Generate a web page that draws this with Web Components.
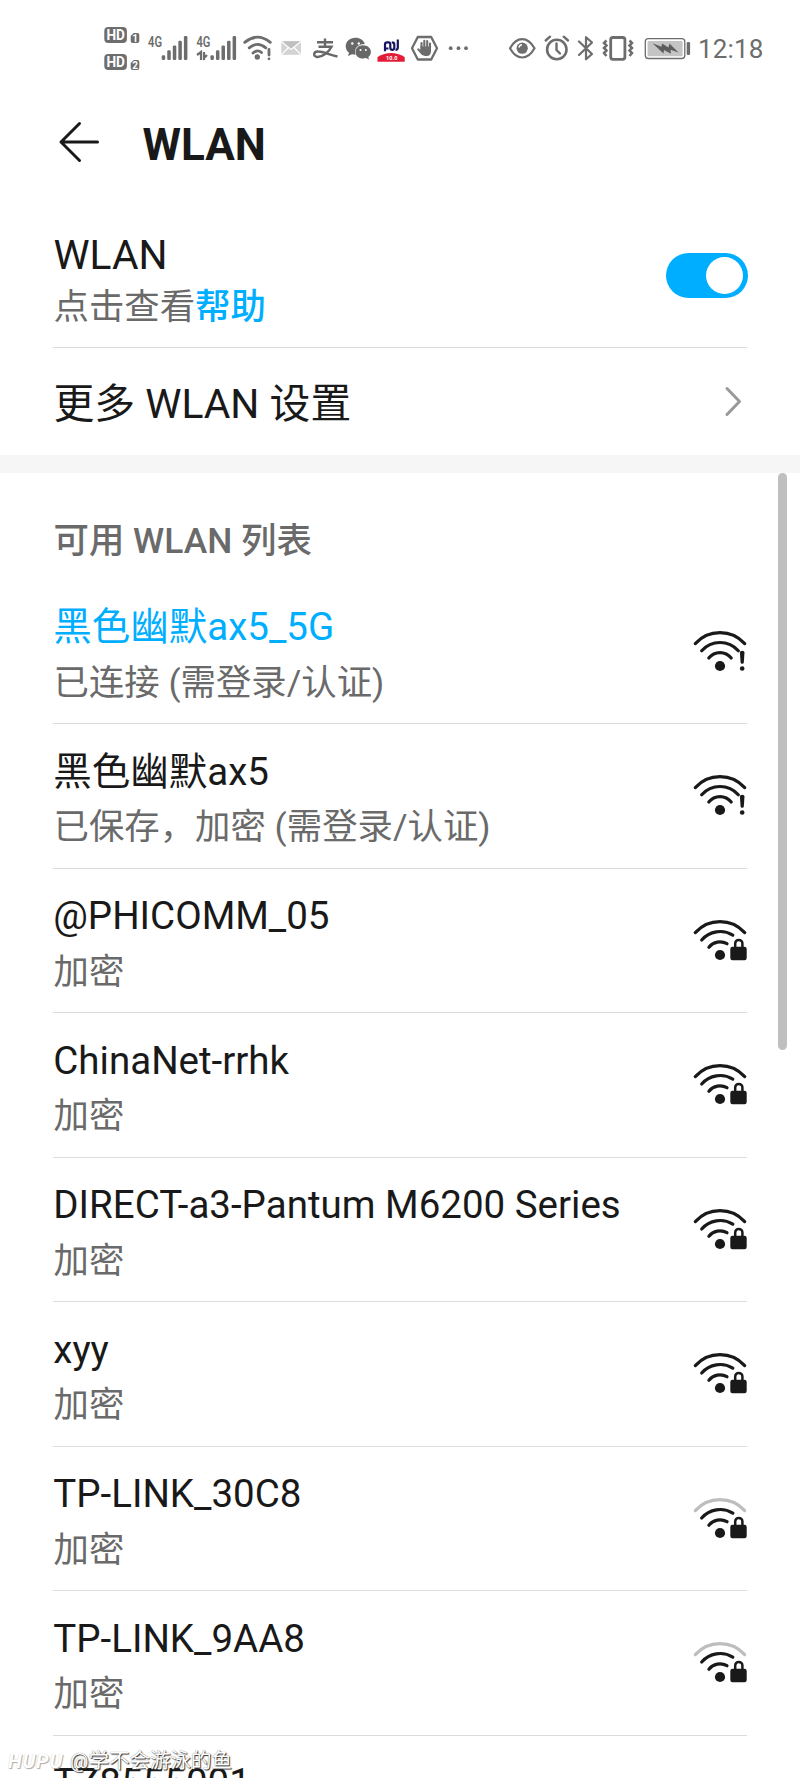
<!DOCTYPE html>
<html lang="zh-CN">
<head>
<meta charset="utf-8">
<title>WLAN</title>
<style>
html,body{margin:0;padding:0;background:#fff}
body{width:800px;height:1778px;overflow:hidden;font-family:Roboto,"Noto Sans CJK SC",sans-serif;color:#191919}
</style>
</head>
<body>
<wlan-screen>
  <status-bar slot="status"></status-bar>
  <title-bar slot="title">WLAN</title-bar>
  <wlan-switch slot="top">WLAN<span slot="hint">点击查看</span><span slot="link">帮助</span></wlan-switch>
  <nav-row slot="top">更多 WLAN 设置</nav-row>
  <section-title>可用 WLAN 列表</section-title>
  <wifi-row mark="alert" active>黑色幽默ax5_5G<span slot="sub">已连接 (需登录/认证)</span></wifi-row>
  <wifi-row mark="alert">黑色幽默ax5<span slot="sub">已保存，加密 (需登录/认证)</span></wifi-row>
  <wifi-row mark="lock">@PHICOMM_05<span slot="sub">加密</span></wifi-row>
  <wifi-row mark="lock">ChinaNet-rrhk<span slot="sub">加密</span></wifi-row>
  <wifi-row mark="lock">DIRECT-a3-Pantum M6200 Series<span slot="sub">加密</span></wifi-row>
  <wifi-row mark="lock">xyy<span slot="sub">加密</span></wifi-row>
  <wifi-row mark="lock" weak>TP-LINK_30C8<span slot="sub">加密</span></wifi-row>
  <wifi-row mark="lock" weak>TP-LINK_9AA8<span slot="sub">加密</span></wifi-row>
  <wifi-row mark="lock">TZ8555001</wifi-row>
  <photo-credit slot="credit">@学不会游泳的鱼</photo-credit>
</wlan-screen>
<script>
const define = (name, html, setup) => customElements.define(name, class extends HTMLElement {
  constructor() {
    super();
    const t = document.createElement('template');
    t.innerHTML = html;
    this.attachShadow({mode: 'open'}).append(t.content.cloneNode(true));
  }
  connectedCallback() { if (setup) setup(this, this.shadowRoot); }
});

define('wlan-screen', `<style>
:host{display:block;position:relative;width:800px;height:1778px;overflow:hidden;background:#fff}
.band{height:17.5px;background:#f6f6f6}
.list{padding:0 53px}
.thumb{position:absolute;left:778px;top:472.5px;width:9px;height:577px;border-radius:5px;background:#bfbfbf}
</style><slot name="status"></slot><slot name="title"></slot><slot name="top"></slot>
<div class="band"></div><div class="list"><slot></slot></div><div class="thumb"></div><slot name="credit"></slot>`);

/* status bar glyphs share one coordinate system: x runs along the bar, y from 20 to 76 */
const hd = (y, n) => `<rect x="104.3" y="${y}" width="22.6" height="16" rx="4" fill="#6d6d6d"/>
<text x="106.400" y="${y+13.2}" font-size="14.5" font-weight="700" textLength="18.500" lengthAdjust="spacingAndGlyphs" fill="#fff">HD</text>
<path d="M133.700 ${y+6}H137.500Q139.300 ${y+6} 139.300 ${y+8}V${y+14}Q139.300 ${y+16} 137.300 ${y+16}H132.700Q130.700 ${y+16} 130.700 ${y+14}V${y+9}Z" fill="#6d6d6d"/>
<text x="132.300" y="${y+14.8}" font-size="10" font-weight="700" fill="#fff">${n}</text>`;
const bars = x => [55.3,50.3,45.4,40.7,36].map((t,i)=>`<rect x="${x+i*5.55}" y="${t}" width="3.5" height="${60-t}" rx="1.3" fill="#6d6d6d"/>`).join('');
const g4 = x => `<text x="${x}" y="46.800" font-size="15" font-weight="600" textLength="14" lengthAdjust="spacingAndGlyphs" fill="#6d6d6d">4G</text>`;
const glyphs = [
 [100,46, hd(27,1)+hd(54,2)],
 [146,48, g4(148)+bars(161.7)],
 [194,46, g4(196.400)+bars(210.400)+`<path d="M197 55L201 52V60M207 55L204 58V52M204 60V57" fill="none" stroke="#6d6d6d" stroke-width="2.200"/>`],
 [240,36, `<g fill="none" stroke="#6d6d6d" stroke-width="2.800" stroke-linecap="round"><path d="M244.700 42.300Q257.500 32 270.300 42.300M249.200 47.800Q257.500 41 265.800 47.800M253 53Q257.500 49 261.500 52.500"/><path d="M269 49.500V55"/></g><circle cx="257.300" cy="57" r="2.700" fill="#6d6d6d"/><circle cx="269" cy="58.800" r="1.400" fill="#6d6d6d"/>`],
 [276,32, `<rect x="281.300" y="41.300" width="19.700" height="13.500" fill="#d3d3d3"/><path d="M281.300 41.500L291 49.500L301 41.500M281.500 54.600L288.500 47.500M301 54.600L294 47.500" fill="none" stroke="#fff" stroke-width="1.200"/><path d="M282.500 41.300H300L291 48.500Z" fill="#c0c0c0"/>`],
 [308,34, `<g fill="none" stroke="#686868" stroke-width="2.400"><path d="M317 42.200H333M325 38.500V46.500M318.500 46.700H331.500C329 52 322 57.300 317 57C312.500 56.500 313.500 51 318.500 51.500C325 52 331 55.500 337.500 56.500"/></g>`],
 [342,33, `<path d="M355.500 37.800C349.700 37.800 345.700 41.500 345.700 46.300C345.700 49 347 51.200 349 52.800L348 56L352 54.200L355.500 54.700C353.500 48.500 358 44 364.800 44C363.700 40.300 360 37.800 355.500 37.800Z" fill="#686868"/><path d="M363 45.300C358.600 45.300 355.500 48.200 355.500 52C355.500 55.800 358.600 58.600 363 58.600L366 58.100L369 59.500L368.300 57C370 55.700 370.900 54 370.900 52C370.900 48.200 367.500 45.300 363 45.300Z" fill="#686868"/><g fill="#fff"><circle cx="352.300" cy="43.500" r="1.200"/><circle cx="358.800" cy="43.500" r="1.200"/><circle cx="360.500" cy="50" r="1"/><circle cx="365.800" cy="50" r="1"/></g>`],
 [375,34, `<path d="M385 51.300V44.500Q385 42.300 387.200 42.300H388.500Q390.300 42.300 390.300 44.500V47.500Q390.300 49.800 392.300 49.800Q394.300 49.800 394.300 47.500V44.500Q394.300 42.300 391.800 42.300M397.800 39.500V47.500Q397.800 49.800 395.500 49.800M386 48.500H388.500" fill="none" stroke="#171461" stroke-width="2.200"/><path d="M377.500 61.700V57Q391 49 404.700 57V61.700Z" fill="#e31c36"/><text x="386" y="60.300" font-size="5.500" font-weight="700" fill="#fff" textLength="11.500">10.0</text>`],
 [409,33, `<path d="M417.800 37H431.200L437 48.200L431.200 59.500H417.800L412 48.200Z" fill="none" stroke="#6d6d6d" stroke-width="2.300" stroke-linejoin="round"/><path d="M421.500 48V43M424.300 47V40.700M427.200 47V41M430 48V43.500" stroke="#6d6d6d" stroke-width="2.100" stroke-linecap="round"/><path d="M420.400 46.500H431V51Q431 56 426.500 56H425Q422 56 420.300 53.300L417.300 49.700Q416.800 48.300 418.400 48.200L420.400 49.700Z" fill="#6d6d6d"/>`],
 [442,60, `<g fill="#6d6d6d"><circle cx="450.700" cy="48.200" r="1.900"/><circle cx="458.500" cy="48.200" r="1.900"/><circle cx="466" cy="48.200" r="1.900"/></g>`],
 [502,38, `<path d="M510 48.300Q515 39.200 522.200 39.200Q529.400 39.200 534.500 48.300Q529.400 57.500 522.200 57.500Q515 57.500 510 48.300Z" fill="none" stroke="#6d6d6d" stroke-width="2.200"/><circle cx="522.200" cy="48.200" r="5.600" fill="#6d6d6d"/><path d="M519 47.500Q519.500 45 522 44.800" fill="none" stroke="#fff" stroke-width="1.500"/>`],
 [540,34, `<circle cx="556.800" cy="49.500" r="9.700" fill="none" stroke="#6d6d6d" stroke-width="2.600"/><path d="M556.500 43.500V50L560 53.500M545.700 40.500L550 36.700M563.700 36.700L568 40.500" fill="none" stroke="#6d6d6d" stroke-width="2.400" stroke-linecap="round" stroke-linejoin="round"/>`],
 [574,24, `<path d="M579 41.500L592 54L586 59.300V37.200L592 42.500L579 55" fill="none" stroke="#6d6d6d" stroke-width="2.200" stroke-linecap="round" stroke-linejoin="round"/>`],
 [598,42, `<rect x="610.700" y="37.500" width="14.200" height="21.800" rx="2.200" fill="none" stroke="#6d6d6d" stroke-width="2.800"/><path d="M606.500 40.500L604 43L606.500 45.500L604 48L606.500 50.500L604 53L606.500 56M629.500 40.500L632 43L629.500 45.500L632 48L629.500 50.500L632 53L629.500 56" fill="none" stroke="#6d6d6d" stroke-width="2.500"/>`],
 [640,58, `<rect x="645.300" y="38.700" width="39.500" height="19.800" rx="3" fill="#fff" stroke="#6d6d6d" stroke-width="1.300"/><rect x="647.600" y="41" width="35" height="15.200" rx="1" fill="#c4c4c4"/><path d="M652.500 43.300L661.500 46.700L662 43.500L668.500 47.500L669.500 43.500L678.500 52.600L670.500 49.700L671 53.700L664 50L663.500 53.500Z" fill="#5d5d5d"/><rect x="686.700" y="42" width="3.400" height="13" rx="1.300" fill="#6d6d6d"/>`]
];
define('status-bar', `<style>
:host{display:flex;box-sizing:border-box;height:98px;padding:20px 0 0 100px;align-items:flex-start}
svg{display:block;height:56px;flex:none}
time{font:400 26px/58px Roboto,sans-serif;color:#6d6d6d;letter-spacing:.15px}
</style>${glyphs.map(([x,w,g])=>`<svg width="${w}" height="56" viewBox="${x} 20 ${w} 56">${g}</svg>`).join('')}<time>12:18</time>`);

define('title-bar', `<style>
:host{display:flex;box-sizing:border-box;align-items:center;height:90px;padding:4px 0 0 56px;font-size:44px;font-weight:700;line-height:60px}
svg{display:block;width:46px;margin:0 40.500px 7px 0}
</style><svg width="46" height="46" viewBox="0 0 46 46" fill="none" stroke="#191919" stroke-width="3" stroke-linecap="round" stroke-linejoin="round"><path d="M41.500 23H5M23.500 4.500L5 23L23.500 41.500"/></svg><slot></slot>`);

define('wlan-switch', `<style>
:host{display:flex;box-sizing:border-box;height:160px;margin:0 53px;border-bottom:1px solid #dcdcdc;justify-content:space-between}
.name{margin-top:42px;padding-left:.5px;font-size:40.700px;line-height:50px}
.hint{margin-top:2px;padding-left:.5px;font-size:35.400px;line-height:50px;color:#6a6a6a}
.hint b{color:#00aeff;font-weight:500}
.track{box-sizing:border-box;width:82px;height:45px;margin:65px -1px 0 0;border-radius:23px;background:#00aeff;padding:4px 5px;display:flex;justify-content:flex-end}
.track i{width:37px;height:37px;border-radius:50%;background:#fff}
</style><div><div class="name"><slot></slot></div><div class="hint"><slot name="hint"></slot><b><slot name="link"></slot></b></div></div><div class="track"><i></i></div>`);

define('nav-row', `<style>
:host{display:flex;height:107px;padding:0 54px 0 53.500px;justify-content:space-between;align-items:center;font-size:40.800px;line-height:56px}
div{padding-top:5px}
</style><div><slot></slot></div><svg width="24" height="34" viewBox="0 0 24 34" fill="none" stroke="#999" stroke-width="3" stroke-linecap="round" stroke-linejoin="round"><path d="M5 3.500L17.500 16.500L5 29.500"/></svg>`);

define('section-title', `<style>
:host{display:block;box-sizing:border-box;height:107.400px;padding:43px 0 0 .5px;font-size:35.400px;line-height:50px;font-weight:500;color:#6a6a6a}
</style><slot></slot>`);

define('wifi-row', `<style>
:host{display:flex;box-sizing:border-box;height:144.500px;border-bottom:1px solid #dcdcdc;justify-content:space-between}
.name{margin-top:22.500px;padding-left:.3px;font-size:38.500px;line-height:50px;white-space:nowrap}
:host([active]) .name{color:#00aeff}
.sub{margin-top:5.500px;padding-left:.5px;font-size:35.400px;line-height:50px;color:#6a6a6a;white-space:nowrap}
svg{display:block;flex:none;margin-top:48px}
</style><div><div class="name"><slot></slot></div><div class="sub"><slot name="sub"></slot></div></div>
<svg width="57" height="46" viewBox="0 0 57 46"></svg>`, (el, root) => {
  const lock = el.getAttribute('mark') === 'lock';
  root.querySelector('svg').innerHTML = `<g fill="none" stroke="#191919" stroke-width="3.200" stroke-linecap="round">
  <path d="M5.300 15.600A33.200 33.200 0 0 1 54.700 15.600" ${el.hasAttribute('weak') ? 'stroke="#bdbdbd"' : ''}/>` + (lock
  ? `<path d="M11.700 23A24.300 24.300 0 0 1 42.800 18.100M18.900 30.200A14.200 14.200 0 0 1 37 26.700"/></g>
     <rect x="40.300" y="29.700" width="16.400" height="13.500" rx="2.200" fill="#191919"/><path d="M45.200 30V26.500A3.600 3.600 0 0 1 52.400 26.500V30" fill="none" stroke="#191919" stroke-width="2.500"/>`
  : `<path d="M11.700 22.800A24.300 24.300 0 0 1 48.300 22.800M18.800 30A14.200 14.200 0 0 1 41.200 30"/></g>
     <path d="M49.900 24.500Q49.900 22.800 52.200 22.800Q54.500 22.800 54.500 24.500L53.800 34.500Q53.700 35.800 52.200 35.800Q50.700 35.800 50.600 34.500Z" fill="#191919"/><circle cx="52.200" cy="40.500" r="2.300" fill="#191919"/>`)
  + `<circle cx="30" cy="38" r="5.100" fill="#191919"/>`;
});

define('photo-credit', `<style>
:host{position:absolute;left:8px;top:1747px;display:flex;align-items:center;gap:4px;height:28px;color:#fff;font-size:20.500px;line-height:28px;white-space:nowrap;text-shadow:1px 1px 1px #333,0 0 1px #666}
i{font:italic 700 20px/28px Roboto,sans-serif;width:58px;letter-spacing:.8px;text-shadow:1px 1px 1px #aaa,0 0 1px #ccc}
</style><i>HUPU</i><slot></slot>`);
</script>
</body>
</html>
